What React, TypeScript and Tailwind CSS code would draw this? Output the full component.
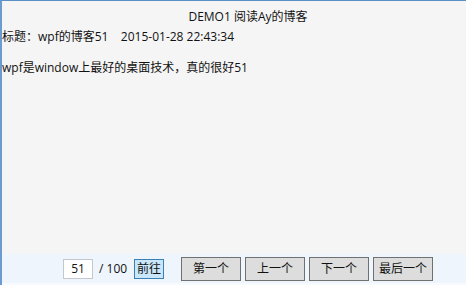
export default function App() {
  const buttons = ['第一个', '上一个', '下一个', '最后一个'];

  return (
    <div className="w-[466px] h-[285px] overflow-hidden bg-[#f5f5f5] border-t border-t-[#5b8fc7] border-l-2 border-l-[#6b9bcf] font-['Open_Sans','Noto_Sans_CJK_SC',sans-serif] text-[12px] text-[#111]">
      <div className="w-[492px] h-full flex flex-col">
        {/* Header */}
        <div className="mt-[6px] h-[20px] leading-[20px] text-center">DEMO1 阅读Ay的博客</div>
        <div className="h-[20px] leading-[20px] whitespace-pre">标题：wpf的博客51    2015-01-28 22:43:34</div>

        {/* Content */}
        <div className="mt-[11px] h-[20px] leading-[20px]">wpf是window上最好的桌面技术，真的很好51</div>

        <div className="flex-1" />

        {/* Pager */}
        <div className="h-[29px] bg-[#eef5fc] flex items-center justify-center">
          <div className="w-[30px] h-[20px] bg-white border border-[#c4c8ce] flex items-center justify-center leading-none">51</div>
          <span className="ml-[6px] w-[30px] whitespace-pre">/ 100</span>
          <div className="ml-[5px] w-[30px] h-[20px] bg-[#c9e6fa] border border-[#3c7fb1] flex items-center justify-center leading-none">前往</div>
          <div className="ml-[17px] flex gap-[4px]">
            {buttons.map(b => (
              <div
                key={b}
                className="w-[60px] h-[24px] bg-[#dddddd] border border-[#707070] flex items-center justify-center leading-none"
              >
                {b}
              </div>
            ))}
          </div>
        </div>
        <div className="h-[2px] bg-[#f8fbfe]" />
      </div>
    </div>
  );
}
